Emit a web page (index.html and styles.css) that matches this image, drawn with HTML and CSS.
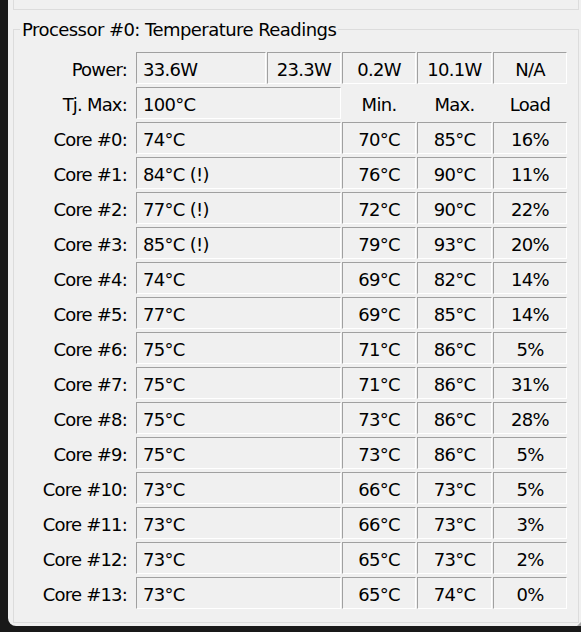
FILE: index.html
```html
<!DOCTYPE html>
<html>
<head>
<meta charset="utf-8">
<link rel="stylesheet" href="styles.css">
</head>
<body>
<div class="panel">
  <div class="prev-group"></div>
  <div class="group">
    <span class="group-title">Processor #0: Temperature Readings</span>
    <div class="grid">
      <div class="label">Power:</div>
      <div class="cell left">33.6W</div>
      <div class="cell center">23.3W</div>
      <div class="cell center">0.2W</div>
      <div class="cell center">10.1W</div>
      <div class="cell center">N/A</div>

      <div class="label">Tj. Max:</div>
      <div class="cell wide">100°C</div>
      <div class="head">Min.</div>
      <div class="head">Max.</div>
      <div class="head">Load</div>

      <div class="label">Core #0:</div><div class="cell wide">74°C</div><div class="cell center">70°C</div><div class="cell center">85°C</div><div class="cell center">16%</div>
      <div class="label">Core #1:</div><div class="cell wide">84°C (!)</div><div class="cell center">76°C</div><div class="cell center">90°C</div><div class="cell center">11%</div>
      <div class="label">Core #2:</div><div class="cell wide">77°C (!)</div><div class="cell center">72°C</div><div class="cell center">90°C</div><div class="cell center">22%</div>
      <div class="label">Core #3:</div><div class="cell wide">85°C (!)</div><div class="cell center">79°C</div><div class="cell center">93°C</div><div class="cell center">20%</div>
      <div class="label">Core #4:</div><div class="cell wide">74°C</div><div class="cell center">69°C</div><div class="cell center">82°C</div><div class="cell center">14%</div>
      <div class="label">Core #5:</div><div class="cell wide">77°C</div><div class="cell center">69°C</div><div class="cell center">85°C</div><div class="cell center">14%</div>
      <div class="label">Core #6:</div><div class="cell wide">75°C</div><div class="cell center">71°C</div><div class="cell center">86°C</div><div class="cell center">5%</div>
      <div class="label">Core #7:</div><div class="cell wide">75°C</div><div class="cell center">71°C</div><div class="cell center">86°C</div><div class="cell center">31%</div>
      <div class="label">Core #8:</div><div class="cell wide">75°C</div><div class="cell center">73°C</div><div class="cell center">86°C</div><div class="cell center">28%</div>
      <div class="label">Core #9:</div><div class="cell wide">75°C</div><div class="cell center">73°C</div><div class="cell center">86°C</div><div class="cell center">5%</div>
      <div class="label">Core #10:</div><div class="cell wide">73°C</div><div class="cell center">66°C</div><div class="cell center">73°C</div><div class="cell center">5%</div>
      <div class="label">Core #11:</div><div class="cell wide">73°C</div><div class="cell center">66°C</div><div class="cell center">73°C</div><div class="cell center">3%</div>
      <div class="label">Core #12:</div><div class="cell wide">73°C</div><div class="cell center">65°C</div><div class="cell center">73°C</div><div class="cell center">2%</div>
      <div class="label">Core #13:</div><div class="cell wide">73°C</div><div class="cell center">65°C</div><div class="cell center">74°C</div><div class="cell center">0%</div>
    </div>
  </div>
  <div class="grip"></div>
</div>
</body>
</html>
```

FILE: styles.css
```css
html, body {
  margin: 0;
  padding: 0;
  background: #191919;
}

body {
  width: 581px;
  height: 632px;
  overflow: hidden;
  font-family: "DejaVu Sans", "Liberation Sans", sans-serif;
  font-size: 18px;
  letter-spacing: -0.7px;
  color: #000;
}

.panel {
  position: relative;
  margin-left: 8px;
  width: 573px;
  height: 626px;
  background: #f0f0f0;
  border-bottom-left-radius: 8px;
  box-sizing: border-box;
  padding-left: 5px;
}

.prev-group {
  width: 566px;
  height: 10px;
  box-sizing: border-box;
  border: 1px solid #dcdcdc;
  border-top: none;
}

.group {
  position: relative;
  margin-top: 19px;
  width: 566px;
  height: 594px;
  box-sizing: border-box;
  border: 1px solid #dcdcdc;
  padding-top: 22px;
}

.group-title {
  position: absolute;
  left: 6px;
  top: -11px;
  padding: 0 2px;
  background: #f0f0f0;
  line-height: 21px;
  white-space: nowrap;
  letter-spacing: -0.55px;
}

.grid {
  display: grid;
  grid-template-columns: 121px 130px 74px 74px 75px 74px;
  grid-auto-rows: 32px;
  column-gap: 1px;
  row-gap: 3px;
}

.label {
  text-align: right;
  padding-right: 8px;
  padding-top: 4px;
  line-height: 27px;
  white-space: nowrap;
  letter-spacing: -0.8px;
}

.head {
  text-align: center;
  padding-top: 4px;
  line-height: 27px;
}

.cell {
  box-sizing: border-box;
  height: 32px;
  border-top: 1px solid #a0a0a0;
  border-left: 1px solid #a0a0a0;
  border-right: 1px solid #ffffff;
  border-bottom: 1px solid #ffffff;
  padding-top: 3px;
  line-height: 27px;
  white-space: nowrap;
  overflow: hidden;
}

.cell.center {
  text-align: center;
}

.cell.left {
  padding-left: 6px;
}

.cell.wide {
  grid-column: span 2;
  padding-left: 6px;
}

.grip {
  position: absolute;
  right: 0;
  bottom: 0;
  width: 0;
  height: 0;
  border-left: 4px solid transparent;
  border-bottom: 4px solid #a8a8a8;
}
```
